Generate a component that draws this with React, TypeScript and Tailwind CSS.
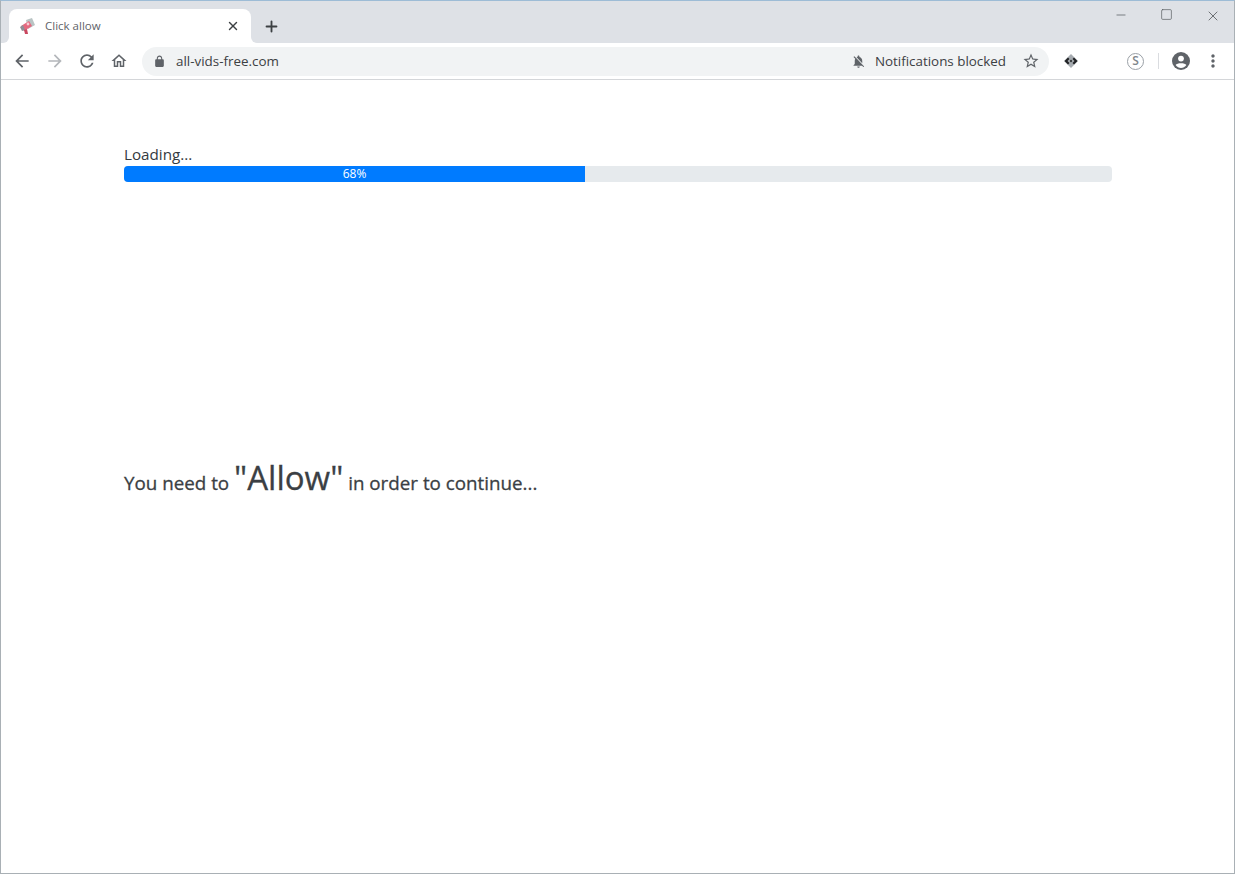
import React from 'react';
import { X, Plus, Minus, Square } from 'lucide-react';

const ui = { fontFamily: '"Open Sans", "Noto Sans", sans-serif' };

const Icon = ({ d, size, className }: { d: string; size: number; className?: string }) => (
  <svg width={size} height={size} viewBox="0 0 24 24" fill="currentColor" className={className}>
    <path d={d} />
  </svg>
);

const icons = {
  back: 'M20 11H7.83l5.59-5.59L12 4l-8 8 8 8 1.41-1.41L7.83 13H20v-2z',
  forward: 'M12 4l-1.41 1.41L16.17 11H4v2h12.17l-5.58 5.59L12 20l8-8z',
  refresh: 'M17.65 6.35C16.2 4.9 14.21 4 12 4c-4.42 0-7.99 3.58-7.99 8s3.57 8 7.99 8c3.73 0 6.84-2.55 7.73-6h-2.08c-.82 2.33-3.04 4-5.65 4-3.31 0-6-2.69-6-6s2.69-6 6-6c1.66 0 3.14.69 4.22 1.78L13 11h7V4l-2.35 2.35z',
  home: 'M12 5.69l5 4.5V18h-2v-6H9v6H7v-7.81l5-4.5M12 3L2 12h3v8h6v-6h2v6h6v-8h3L12 3z',
  lock: 'M18 8h-1V6c0-2.76-2.24-5-5-5S7 3.24 7 6v2H6c-1.1 0-2 .9-2 2v10c0 1.1.9 2 2 2h12c1.1 0 2-.9 2-2V10c0-1.1-.9-2-2-2zM9 6c0-1.66 1.34-3 3-3s3 1.34 3 3v2H9V6z',
  bellOff: 'M20 18.69L7.84 6.14 5.27 3.49 4 4.76l2.8 2.8v.01c-.52.99-.8 2.16-.8 3.42v5l-2 2v1h13.73l2 2L21 20.73l-1-2.04zM12 22c1.11 0 2-.89 2-2h-4c0 1.11.89 2 2 2zm6-7.32V11c0-3.08-1.64-5.64-4.5-6.32V4c0-.83-.67-1.5-1.5-1.5s-1.5.67-1.5 1.5v.68c-.15.03-.29.08-.42.12-.1.03-.2.07-.3.11h-.01c-.2.08-.4.17-.59.27-.1.05-.2.1-.3.16L18 14.68z',
  star: 'M22 9.24l-7.19-.62L12 2 9.19 8.63 2 9.24l5.46 4.73L5.82 21 12 17.27 18.18 21l-1.63-7.03L22 9.24zM12 15.4l-3.76 2.27 1-4.28-3.32-2.88 4.38-.38L12 6.1l1.71 4.04 4.38.38-3.32 2.88 1 4.28L12 15.4z',
  dots: 'M12 8c1.1 0 2-.9 2-2s-.9-2-2-2-2 .9-2 2 .9 2 2 2zm0 2c-1.1 0-2 .9-2 2s.9 2 2 2 2-.9 2-2-.9-2-2-2zm0 6c-1.1 0-2 .9-2 2s.9 2 2 2 2-.9 2-2-.9-2-2-2z',
};

const Favicon = () => (
  <svg width="18" height="18" viewBox="0 0 18 18">
    <path d="M8 3 L14 1 L17 8 L10 12 Z" fill="#b9c4c4" />
    <path d="M3 9 L11 4 L14 9 L6 14 Z" fill="#e4697f" />
    <path d="M2 10 L5 8 L7 13 L4 14 Z" fill="#8d8f96" />
    <path d="M6 13 L9 12 L10 17 L7 17 Z" fill="#c9475f" />
    <circle cx="10" cy="7" r="1.4" fill="#f6ccd4" />
  </svg>
);

const ExtensionIcon = () => (
  <svg width="16" height="16" viewBox="0 0 16 16">
    <path d="M8 1 L15 8 L8 15 L1 8 Z" fill="#a6abb0" />
    <path d="M5 4.5 L1.5 8 L5 11.5 L6.5 10 L4.5 8 L6.5 6 Z" fill="#202124" />
    <path d="M11 4.5 L14.5 8 L11 11.5 L9.5 10 L11.5 8 L9.5 6 Z" fill="#202124" />
    <circle cx="8" cy="8" r="1.2" fill="#3c4043" />
  </svg>
);

const ProfileIcon = () => (
  <svg width="20" height="20" viewBox="0 0 20 20">
    <circle cx="10" cy="10" r="9" fill="#5f6368" />
    <circle cx="10" cy="7.6" r="2.9" fill="#fff" />
    <path d="M4.6 14 C6 11.6 14 11.6 15.4 14 C14 16 12 17 10 17 C8 17 6 16 4.6 14 Z" fill="#fff" />
  </svg>
);

export default function App() {
  return (
    <div className="w-[1235px] h-[874px] flex flex-col bg-white overflow-hidden border border-[#a9b0b5] border-t-[#9dbcd6]" style={ui}>
      {/* tab strip */}
      <div className="h-[42px] shrink-0 bg-[#dee1e6] flex items-end pl-2">
        <div className="relative w-[242px] h-[34px] bg-white rounded-t-lg flex items-center pl-[9px] pr-[11px]">
          <div className="absolute bottom-0 -left-[6px] w-[6px] h-[6px] bg-white">
            <div className="w-full h-full bg-[#dee1e6] rounded-br-[6px]" />
          </div>
          <div className="absolute bottom-0 -right-[6px] w-[6px] h-[6px] bg-white">
            <div className="w-full h-full bg-[#dee1e6] rounded-bl-[6px]" />
          </div>
          <Favicon />
          <span className="ml-[9px] text-[11.5px] text-[#5f6368]">Click allow</span>
          <X size={14} strokeWidth={2.4} className="ml-auto text-[#3c4043]" />
        </div>
        <div className="h-[34px] ml-[12px] flex items-center">
          <Plus size={17} strokeWidth={2.6} className="text-[#3c4043]" />
        </div>
        <div className="ml-auto h-full flex items-start pt-[7px] pr-[13px] gap-[32px] text-[#4f5357]">
          <Minus size={14} strokeWidth={1.2} />
          <Square size={13} strokeWidth={1.2} />
          <X size={16} strokeWidth={1.2} />
        </div>
      </div>

      {/* toolbar */}
      <div className="h-[37px] shrink-0 bg-white border-b border-[#d4d6d9] flex items-center pl-[11px]">
        <Icon d={icons.back} size={20} className="text-[#5f6368]" />
        <Icon d={icons.forward} size={20} className="ml-[13px] text-[#b4b7bb]" />
        <Icon d={icons.refresh} size={20} className="ml-[12px] text-[#5f6368]" />
        <Icon d={icons.home} size={18} className="ml-[13px] text-[#5f6368]" />
        <div className="ml-[14px] w-[907px] h-[29px] rounded-full bg-[#f1f3f4] flex items-center pl-[11px] pr-[9px]">
          <Icon d={icons.lock} size={13} className="text-[#5f6368]" />
          <span className="ml-[10px] text-[13.4px] text-[#3c4043]">all-vids-free.com</span>
          <Icon d={icons.bellOff} size={15} className="ml-auto text-[#5f6368]" />
          <span className="ml-[9px] text-[13.4px] text-[#3c4043]">Notifications blocked</span>
          <Icon d={icons.star} size={18} className="ml-[16px] text-[#5f6368]" />
        </div>
        <div className="ml-[14px] w-4 flex justify-center"><ExtensionIcon /></div>
        <div className="ml-[48px] w-[17px] h-[17px] rounded-full border border-[#9aa0a6] flex items-center justify-center text-[12px] font-semibold leading-none text-[#80868b]">S</div>
        <div className="ml-[14px] w-px h-[16px] bg-[#dadce0]" />
        <div className="ml-[12px]"><ProfileIcon /></div>
        <Icon d={icons.dots} size={20} className="ml-[12px] text-[#5f6368]" />
      </div>

      {/* page */}
      <div className="flex-1 pl-[123px] pr-[122px] pt-[62px] text-[#343a40]">
        <div className="text-[15.2px] leading-[24px]">Loading...</div>
        <div className="h-[16px] rounded bg-[#e6eaed] overflow-hidden flex">
          <div className="w-[461px] bg-[#007bff] text-white text-[12px] leading-[16px] text-center">68%</div>
        </div>
        <h4 className="mt-[272px] text-[18.8px] leading-[48px] text-[#3b3f44] [-webkit-text-stroke:0.3px_#3b3f44]">
          You need to <span className="text-[33px]">"Allow"</span> in order to continue...
        </h4>
      </div>
    </div>
  );
}
